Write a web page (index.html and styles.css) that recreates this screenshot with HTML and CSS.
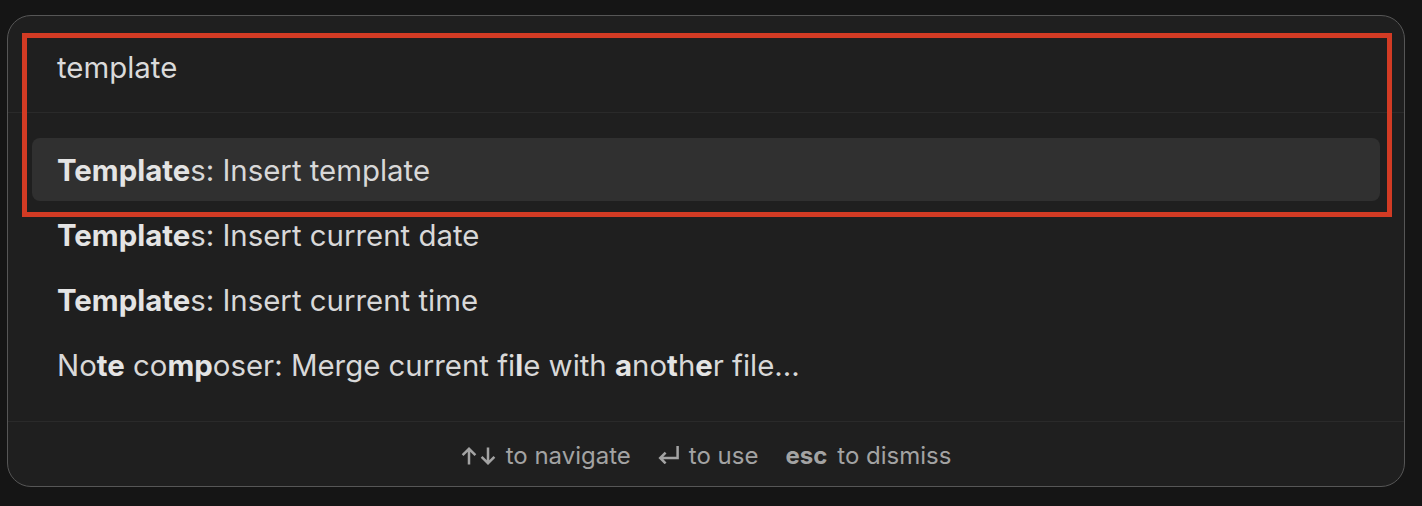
FILE: index.html
```html
<!DOCTYPE html>
<html lang="en">
<head>
<meta charset="utf-8">
<link rel="stylesheet" href="styles.css">
</head>
<body>
<div class="modal">
  <div class="prompt-input">template</div>
  <div class="results">
    <div class="item selected"><b>Template</b>s: Insert template</div>
    <div class="item"><b>Template</b>s: Insert current date</div>
    <div class="item"><b>Template</b>s: Insert current time</div>
    <div class="item">No<b>te</b> co<b>mp</b>oser: Merge current fi<b>l</b>e with <b>a</b>no<b>t</b>h<b>e</b>r file...</div>
  </div>
  <div class="instructions">
    <div class="instr">
      <span class="key arrows">
        <svg class="arrow" width="16" height="18" viewBox="0 0 16 18"><path d="M8 2 V17.5 M1.6 8.2 L8 1.8 L14.4 8.2" fill="none" stroke="currentColor" stroke-width="2.5" stroke-linecap="butt" stroke-linejoin="miter"/></svg>
        <svg class="arrow" width="16" height="18" viewBox="0 0 16 18"><path d="M8 0.5 V16 M1.6 9.8 L8 16.2 L14.4 9.8" fill="none" stroke="currentColor" stroke-width="2.5" stroke-linecap="butt" stroke-linejoin="miter"/></svg>
      </span>
      <span>to navigate</span>
    </div>
    <div class="instr">
      <span class="key enter">
        <svg width="21" height="18" viewBox="0 0 21 18"><path d="M19.6 0 V12 H2.5 M7.6 6.6 L2.2 12 L7.6 17.4" fill="none" stroke="currentColor" stroke-width="2.5" stroke-linejoin="miter"/></svg>
      </span>
      <span>to use</span>
    </div>
    <div class="instr"><span class="key esc">esc</span><span>to dismiss</span></div>
  </div>
  <div class="highlight"></div>
</div>
</body>
</html>
```
FILE: styles.css
```css
html, body {
  margin: 0;
  padding: 0;
  background: #151515;
  font-family: Inter, "Noto Sans", sans-serif;
}
body {
  padding: 15px 0 0 7px;
  height: 506px;
  box-sizing: border-box;
}
.modal {
  position: relative;
  width: 1398px;
  height: 472px;
  box-sizing: border-box;
  background: #1f1f1f;
  border: 1px solid #565656;
  border-radius: 24px;
  display: flex;
  flex-direction: column;
}
.prompt-input {
  height: 97px;
  box-sizing: border-box;
  padding: 6px 0 0 49px;
  display: flex;
  align-items: center;
  font-size: 29.4px;
  color: #dadada;
  border-bottom: 1px solid #2a2a2a;
}
.results {
  padding: 25px 24px 25px 24px;
  display: flex;
  flex-direction: column;
  gap: 2px;
  border-bottom: 1px solid #2a2a2a;
}
.item {
  height: 63px;
  box-sizing: border-box;
  padding: 2px 0 0 25px;
  display: flex;
  align-items: center;
  font-size: 29.4px;
  color: #d8d8d8;
  border-radius: 8px;
  white-space: pre;
}
.item b {
  font-weight: 700;
  color: #e4e4e4;
}
.item.selected {
  background: #303030;
}
.instructions {
  flex: 1;
  display: flex;
  justify-content: center;
  align-items: center;
  gap: 27px;
  font-size: 24px;
  color: #a3a3a3;
  padding-top: 3px;
}
.instr {
  display: flex;
  align-items: center;
  gap: 10px;
}
.key {
  display: flex;
  align-items: center;
}
.key.arrows {
  gap: 3px;
  padding-top: 1px;
}
.key.enter {
  padding-bottom: 1px;
}
.key.esc {
  font-weight: 700;
}
.highlight {
  position: absolute;
  left: 14px;
  top: 17px;
  width: 1370px;
  height: 184px;
  box-sizing: border-box;
  border: 5px solid #d23b24;
  pointer-events: none;
}
```
